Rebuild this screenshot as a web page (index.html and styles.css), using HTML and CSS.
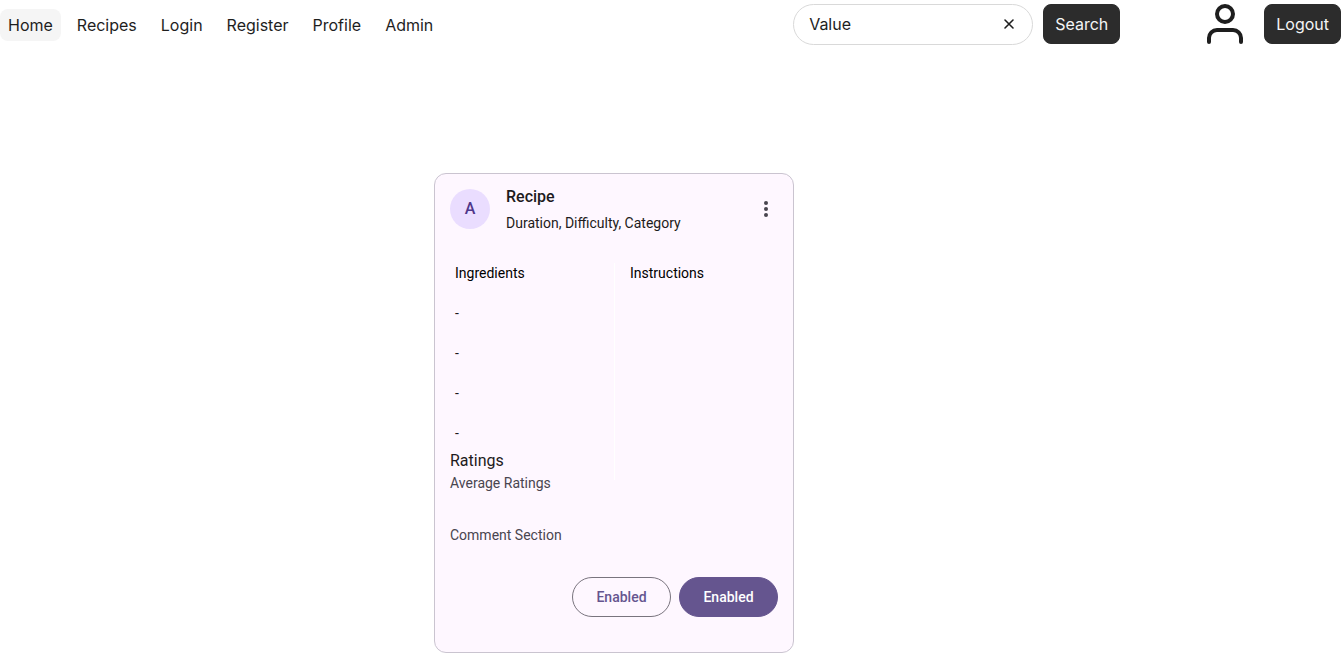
FILE: index.html
```html
<!DOCTYPE html>
<html lang="en">
<head>
<meta charset="utf-8">
<meta name="viewport" content="width=device-width, initial-scale=1">
<title>Recipes</title>
<link rel="stylesheet" href="styles.css">
</head>
<body>
<header class="topbar">
  <nav class="nav" aria-label="Main">
    <a class="nav-link active" href="#home" aria-current="page">Home</a>
    <a class="nav-link" href="#recipes">Recipes</a>
    <a class="nav-link" href="#login">Login</a>
    <a class="nav-link" href="#register">Register</a>
    <a class="nav-link" href="#profile">Profile</a>
    <a class="nav-link" href="#admin">Admin</a>
  </nav>
  <form class="search" role="search">
    <div class="search-field">
      <input class="search-input" type="text" value="Value" aria-label="Search recipes">
      <button class="clear" type="reset" aria-label="Clear">
        <svg width="16" height="16" viewBox="0 0 16 16" fill="none" stroke="currentColor" stroke-width="1.6" stroke-linecap="round" stroke-linejoin="round"><path d="M12 4 4 12M4 4l8 8"/></svg>
      </button>
    </div>
    <button class="dark-button" type="button">Search</button>
  </form>
  <div class="account">
    <svg class="user" width="48" height="48" viewBox="0 0 48 48" fill="none" stroke="currentColor" stroke-width="4" stroke-linecap="round" stroke-linejoin="round" role="img" aria-label="User"><path d="M40 42V38A8 8 0 0 0 32 30H16A8 8 0 0 0 8 38V42"/><circle cx="24" cy="14" r="8"/></svg>
    <button class="dark-button" type="button">Logout</button>
  </div>
</header>
<main class="page">
  <article class="card">
    <header class="card-head">
      <div class="avatar">A</div>
      <div class="card-titles">
        <h1 class="title">Recipe</h1>
        <p class="subtitle">Duration, Difficulty, Category</p>
      </div>
      <button class="more" type="button" aria-label="More options">
        <svg width="24" height="24" viewBox="0 0 24 24" fill="currentColor"><circle cx="12" cy="6" r="2"/><circle cx="12" cy="12" r="2"/><circle cx="12" cy="18" r="2"/></svg>
      </button>
    </header>
    <div class="columns">
      <div class="details">
        <section class="ingredients">
          <h2 class="label">Ingredients</h2>
          <p class="item">-</p>
          <p class="item">-</p>
          <p class="item">-</p>
          <p class="item">-</p>
        </section>
        <section class="ratings">
          <h2 class="ratings-title">Ratings</h2>
          <p class="muted">Average Ratings</p>
        </section>
      </div>
      <section class="instructions">
        <h2 class="label">Instructions</h2>
      </section>
    </div>
    <p class="comments muted">Comment Section</p>
    <div class="actions">
      <button class="pill outlined" type="button">Enabled</button>
      <button class="pill filled" type="button">Enabled</button>
    </div>
  </article>
</main>
</body>
</html>
```

FILE: styles.css
```css
* {
  box-sizing: border-box;
}

body {
  margin: 0;
  background: #fff;
  color: #1e1e1e;
  font-family: Inter, sans-serif;
  font-size: 16px;
}

h1, h2, p {
  margin: 0;
  font-weight: 400;
}

button, input {
  font: inherit;
}

svg {
  display: block;
}

.topbar {
  display: flex;
  align-items: center;
}

.nav {
  display: flex;
  gap: 8px;
  padding-top: 2px;
  margin-right: auto;
}

.nav-link {
  padding: 4px 8px;
  border-radius: 8px;
  line-height: 24px;
  color: #1e1e1e;
  text-decoration: none;
}

.nav-link.active {
  background: #f5f5f5;
}

.search {
  display: flex;
  align-items: center;
  gap: 10px;
}

.search-field {
  display: flex;
  align-items: center;
  width: 240px;
  height: 41px;
  padding: 0 15px;
  border: 1px solid #d9d9d9;
  border-radius: 21px;
}

.search-input {
  flex: 1;
  min-width: 0;
  padding: 0;
  border: 0;
  outline: 0;
  background: transparent;
  color: #1e1e1e;
}

.clear {
  padding: 0;
  border: 0;
  background: none;
  color: #1e1e1e;
}

.dark-button {
  height: 40px;
  padding: 0 11px;
  border: 1px solid #2c2c2c;
  border-radius: 8px;
  background: #2c2c2c;
  color: #f5f5f5;
}

.account {
  display: flex;
  align-items: center;
  gap: 15px;
  margin-left: 81px;
}

.page {
  padding: 125px 16px 0 434px;
}

.card {
  max-width: 360px;
  padding-bottom: 35px;
  border: 1px solid #cac4d0;
  border-radius: 12px;
  background: #fef7ff;
  color: #1d1b20;
  font-family: Roboto, sans-serif;
  font-size: 14px;
  line-height: 20px;
}

.card-head {
  display: flex;
  align-items: center;
  gap: 16px;
  padding: 11px 3px 12px 15px;
}

.avatar {
  width: 40px;
  border-radius: 50%;
  background: #eaddff;
  color: #4f378a;
  font-size: 16px;
  font-weight: 500;
  line-height: 40px;
  text-align: center;
}

.card-titles {
  flex: 1;
}

.title {
  margin-bottom: 4px;
  font-size: 16px;
  font-weight: 500;
  line-height: 24px;
}

.more {
  padding: 12px;
  border: 0;
  background: none;
  color: #49454f;
}

.columns {
  display: grid;
  grid-template-columns: 1fr 1fr;
  align-items: start;
  padding-top: 18px;
}

.ingredients {
  display: grid;
  gap: 20px;
  padding-left: 20px;
}

.label {
  color: #000;
  font-size: 14px;
  line-height: 20px;
}

.ratings {
  padding: 6px 0 0 15px;
}

.ratings-title {
  font-size: 16px;
  line-height: 24px;
}

.muted {
  color: #49454f;
}

.instructions {
  min-height: 217px;
  padding-left: 15px;
  border-left: 1px solid #fff;
}

.comments {
  padding: 32px 15px;
}

.actions {
  display: flex;
  justify-content: flex-end;
  gap: 8px;
  padding: 0 15px;
}

.pill {
  min-width: 99px;
  height: 40px;
  padding: 0 23px;
  border: 1px solid #79747e;
  border-radius: 20px;
  font-weight: 500;
}

.outlined {
  background: transparent;
  color: #65558f;
}

.filled {
  border-color: #65558f;
  background: #65558f;
  color: #fff;
}
```
